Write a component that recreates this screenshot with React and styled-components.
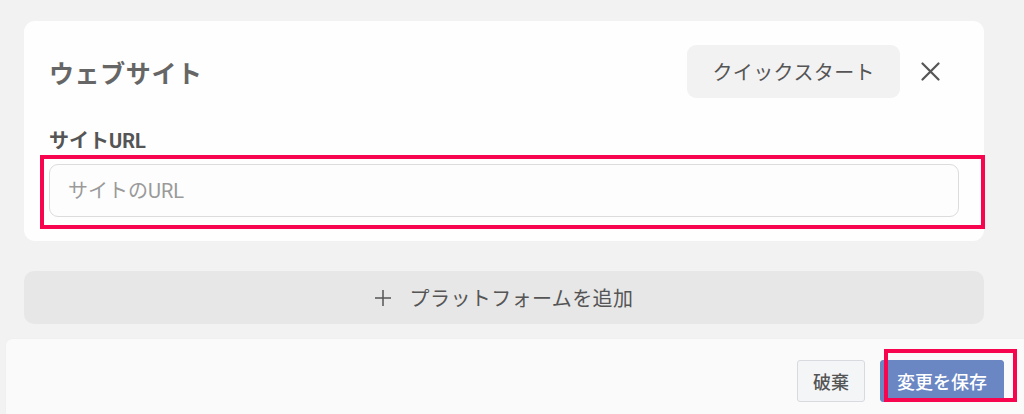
import styled, { createGlobalStyle } from "styled-components";

const GlobalStyle = createGlobalStyle`
  body {
    margin: 0;
    background: #f2f2f2;
    font-family: Roboto, "Noto Sans CJK JP", sans-serif;
    color: #555;
  }
`;

export default function App() {
  return (
    <>
      <GlobalStyle />
      <Page>
        <Content>
          <Card>
            <Header>
              <Title>ウェブサイト</Title>
              <HeaderActions>
                <QuickStart>クイックスタート</QuickStart>
                <CloseButton aria-label="閉じる">
                  <svg width="19" height="19" viewBox="0 0 19 19">
                    <path
                      d="M1.5 1.5 L17.5 17.5 M17.5 1.5 L1.5 17.5"
                      stroke="#555"
                      strokeWidth="2.2"
                      strokeLinecap="round"
                    />
                  </svg>
                </CloseButton>
              </HeaderActions>
            </Header>
            <Field>
              <Label>サイトURL</Label>
              <InputWrap>
                <Input placeholder="サイトのURL" />
                <Highlight $top={-9} $left={-9} $right={-26} $bottom={-12} />
              </InputWrap>
            </Field>
          </Card>
          <AddPlatform>
            <svg width="16" height="16" viewBox="0 0 16 16">
              <path d="M8 0 V16 M0 8 H16" stroke="#555" strokeWidth="1.5" />
            </svg>
            プラットフォームを追加
          </AddPlatform>
        </Content>
        <Footer>
          <Button>破棄</Button>
          <SaveWrap>
            <Button $primary>変更を保存</Button>
            <Highlight $top={-11} $left={4} $right={-13} $bottom={0} />
          </SaveWrap>
        </Footer>
      </Page>
    </>
  );
}

const Page = styled.div`
  display: flex;
  flex-direction: column;
  min-height: 414px;
  overflow: hidden;
`;

const Content = styled.div`
  display: flex;
  flex-direction: column;
  gap: 30px;
  padding: 21px 40px 0 24px;
`;

const Card = styled.section`
  background: #fefefe;
  border-radius: 11px;
  padding: 24px 25px;
  display: flex;
  flex-direction: column;
  gap: 31px;
`;

const Header = styled.div`
  display: flex;
  align-items: center;
  justify-content: space-between;
  height: 53px;
`;

const Title = styled.h1`
  margin: 0;
  font-size: 25px;
  font-weight: 700;
  color: #666;
  letter-spacing: 0.6px;
`;

const HeaderActions = styled.div`
  display: flex;
  align-items: center;
  gap: 10px;
  margin-right: 9px;
`;

const QuickStart = styled.button`
  height: 53px;
  padding: 0 25px;
  border: none;
  border-radius: 9px;
  background: #f2f2f2;
  color: #555;
  font: 400 20px Roboto, "Noto Sans CJK JP", sans-serif;
  letter-spacing: 0.4px;
`;

const CloseButton = styled.button`
  width: 40px;
  height: 40px;
  display: flex;
  align-items: center;
  justify-content: center;
  border: none;
  background: none;
  padding: 0;
`;

const Field = styled.div`
  display: flex;
  flex-direction: column;
  gap: 11px;
`;

const Label = styled.label`
  font-size: 20px;
  line-height: 24px;
  font-weight: 700;
  color: #555;
`;

const InputWrap = styled.div`
  position: relative;
`;

const Input = styled.input`
  box-sizing: border-box;
  width: 100%;
  height: 53px;
  padding: 0 18px;
  border: 1.5px solid #dcdcdc;
  border-radius: 9px;
  background: #fdfdfd;
  font: 400 20px Roboto, "Noto Sans CJK JP", sans-serif;
  color: #555;
  &::placeholder {
    color: #9a9a9a;
  }
`;

const Highlight = styled.div`
  position: absolute;
  top: ${(p) => p.$top}px;
  left: ${(p) => p.$left}px;
  right: ${(p) => p.$right}px;
  bottom: ${(p) => p.$bottom}px;
  border: 4px solid #f7064f;
  pointer-events: none;
`;

const AddPlatform = styled.button`
  height: 53px;
  display: flex;
  align-items: center;
  justify-content: center;
  gap: 19px;
  border: none;
  border-radius: 10px;
  background: #e7e7e7;
  color: #555;
  font: 400 20px Roboto, "Noto Sans CJK JP", sans-serif;
  letter-spacing: 0.4px;
  padding: 0;
`;

const Footer = styled.footer`
  flex: 1;
  margin: 15px 0 0 6px;
  padding: 21px 20px 12px;
  background: #fafafa;
  border-top-left-radius: 6px;
  box-shadow: 0 0 2px rgba(0, 0, 0, 0.04);
  display: flex;
  justify-content: flex-end;
  align-items: flex-start;
  gap: 15px;
`;

const SaveWrap = styled.div`
  position: relative;
`;

const Button = styled.button`
  height: 42px;
  padding: 0 ${(p) => (p.$primary ? 16 : 15)}px;
  border-radius: 3px;
  border: 1px solid ${(p) => (p.$primary ? "#6a86c3" : "#d8dadf")};
  background: ${(p) => (p.$primary ? "#6a86c3" : "#f4f5f7")};
  color: ${(p) => (p.$primary ? "#fff" : "#555")};
  font: 500 18px Roboto, "Noto Sans CJK JP", sans-serif;
`;
